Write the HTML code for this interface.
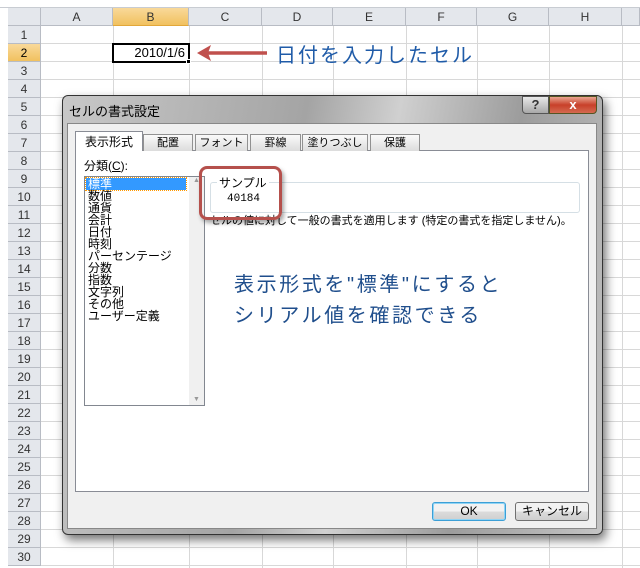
<!DOCTYPE html>
<html><head><meta charset="utf-8"><style>
*{margin:0;padding:0;box-sizing:border-box}
body{width:640px;height:568px;overflow:hidden;background:#fff;position:relative;font-family:"Liberation Sans","Noto Sans CJK JP",sans-serif}
.a{position:absolute}
.jp{font-family:"Liberation Sans","Noto Sans CJK JP",sans-serif}
.hl{position:absolute;height:1px;background:#d8d8d8;left:41px;width:599px}
.vl{position:absolute;width:1px;background:#d8d8d8;top:26px;height:542px}
.rh{position:absolute;left:8px;width:33px;height:18px;text-align:center;font-size:12px;line-height:18px;color:#333;border-bottom:1px solid #b8bcc4;border-right:1px solid #b8bcc4;background:#e4e7ec}
.ch{position:absolute;top:8px;height:18px;text-align:center;font-size:12px;line-height:18px;color:#333;border-right:1px solid #b8bcc4;background:#e4e7ec;border-bottom:1px solid #b8bcc4}
.tab{position:absolute;top:134px;height:17px;border:1px solid #919191;border-bottom:none;background:linear-gradient(#fafafa,#dcdcdc);font-size:11px;text-align:center;line-height:16px;white-space:nowrap;overflow:hidden}
.li{font-size:12px;line-height:12px;height:12px;padding-left:3px}
.btn{position:absolute;top:502px;height:19px;border:1px solid #707070;border-radius:3px;background:linear-gradient(#f2f2f2 50%,#dcdcdc 50%,#cfcfcf);font-size:12px;text-align:center;line-height:17px}
</style></head><body>
<div class="a" style="left:0;top:7px;width:640px;height:1px;background:#c8ccd2"></div>
<div id="g"></div>
<script>
var h='';
var cols=[41,113,189,262,333,406,477,549,622];
for(var i=1;i<cols.length;i++){h+='<div class="vl" style="left:'+cols[i]+'px"></div>'}
for(var r=1;r<=30;r++){var t=26+(r-1)*18;h+='<div class="hl" style="top:'+(t+17)+'px"></div>';
h+='<div class="rh" style="top:'+t+'px;'+(r==2?'background:linear-gradient(#f9d99a,#f1c15f);color:#000;':'')+'">'+r+'</div>'}
var L='ABCDEFGH';
for(var i=0;i<8;i++){h+='<div class="ch" style="left:'+cols[i]+'px;width:'+(cols[i+1]-cols[i])+'px;'+(i==1?'background:linear-gradient(#f9d99a,#f1c15f);border-bottom:1px solid #e2a73a;':'')+'">'+L[i]+'</div>'}
h+='<div class="ch" style="left:622px;width:18px"></div><div class="ch" style="left:8px;width:33px"></div>';
document.getElementById('g').innerHTML=h;
</script>
<div class="a" style="left:112px;top:43px;width:78px;height:20px;border:2px solid #000;background:#fff;font-size:13px;text-align:right;padding-right:3px;line-height:16px">2010/1/6</div>
<div class="a" style="left:186px;top:59px;width:5px;height:5px;background:#000;border:1px solid #fff"></div>
<svg class="a" style="left:195px;top:44px" width="75" height="18"><line x1="12" y1="9" x2="72" y2="9" stroke="#c0504d" stroke-width="3.5"/><path d="M2 9 L16 1 L13 9 L16 17 Z" fill="#c0504d"/></svg>
<div class="a jp" style="left:276px;top:39px;font-size:20px;color:#1f5ba8;letter-spacing:2px">日付を入力したセル</div>
<!-- dialog -->
<div class="a" style="left:62px;top:95px;width:541px;height:440px;border:1px solid #333;border-radius:6px;background:linear-gradient(100deg,#c8c8c8,#a4a4a4 40%,#d0d0d0 55%,#9c9c9c 75%,#c4c4c4);box-shadow:3px 5px 10px rgba(0,0,0,.55)"></div>
<div class="a jp" style="left:69px;top:101px;font-size:13px;color:#000">セルの書式設定</div>
<div class="a" style="left:522px;top:96px;width:27px;height:18px;border:1px solid #555;border-radius:0 0 0 4px;background:linear-gradient(#e8e8e8,#a8a8a8);font-size:13px;font-weight:bold;color:#333;text-align:center;line-height:16px">?</div>
<div class="a" style="left:549px;top:96px;width:48px;height:18px;border:1px solid #552;border-radius:0 0 4px 0;background:linear-gradient(#e9a590,#c8402a 50%,#d46a50);font-size:13px;font-weight:bold;color:#fff;text-align:center;line-height:16px">x</div>
<div class="a" style="left:67px;top:123px;width:530px;height:406px;background:#f0f0f0;border:1px solid #888"></div>
<div class="a" style="left:75px;top:150px;width:514px;height:342px;background:#fff;border:1px solid #898c95"></div>
<div class="tab" style="left:75px;top:131px;width:68px;height:20px;background:#fff;border-color:#898c95;line-height:20px;font-size:12px">表示形式</div>
<div class="tab" style="left:143px;width:50px">配置</div>
<div class="tab" style="left:195px;width:53px">フォント</div>
<div class="tab" style="left:250px;width:51px">罫線</div>
<div class="tab" style="left:302px;width:66px">塗りつぶし</div>
<div class="tab" style="left:370px;width:50px">保護</div>
<div class="a jp" style="left:84px;top:157px;font-size:12px">分類(<u>C</u>):</div>
<div class="a" style="left:84px;top:176px;width:121px;height:230px;border:1px solid #828790;background:#fff;padding-top:1px">
<div class="li" style="background:#3399ff;color:#fff;width:100px;margin-left:1px;padding-left:2px;outline:1px dotted #f90">標準</div>
<div class="li">数値</div><div class="li">通貨</div><div class="li">会計</div><div class="li">日付</div><div class="li">時刻</div><div class="li">パーセンテージ</div><div class="li">分数</div><div class="li">指数</div><div class="li">文字列</div><div class="li">その他</div><div class="li">ユーザー定義</div>
</div>
<div class="a" style="left:189px;top:177px;width:15px;height:228px;background:#f0f0f0;font-size:7px;color:#999;text-align:center">▲<div style="position:absolute;bottom:2px;width:15px">▼</div></div>
<div class="a" style="left:210px;top:182px;width:370px;height:31px;border:1px solid #d5dfe5;border-radius:3px"></div>
<div class="a jp" style="left:217px;top:174px;font-size:12px;background:#fff;padding:0 2px">サンプル</div>
<div class="a" style="left:227px;top:193px;font-size:11px;font-family:'Liberation Mono',monospace">40184</div>
<div class="a jp" style="left:210px;top:212px;font-size:11px;color:#000;white-space:nowrap">セルの値に対して一般の書式を適用します (特定の書式を指定しません)。</div>
<div class="a" style="left:199px;top:166px;width:83px;height:54px;border:3px solid #b5504c;border-radius:8px;box-shadow:2px 3px 4px rgba(0,0,0,.35)"></div>
<div class="a jp" style="left:234px;top:270px;font-size:20px;line-height:31px;color:#1f4e8c;letter-spacing:2.6px;white-space:nowrap">表示形式を"標準"にすると<br>シリアル値を確認できる</div>
<div class="btn" style="left:432px;width:74px;border-color:#3c9fd6;box-shadow:inset 0 0 0 1px #8fd4f5">OK</div>
<div class="btn" style="left:515px;width:74px">キャンセル</div>
</body></html>
